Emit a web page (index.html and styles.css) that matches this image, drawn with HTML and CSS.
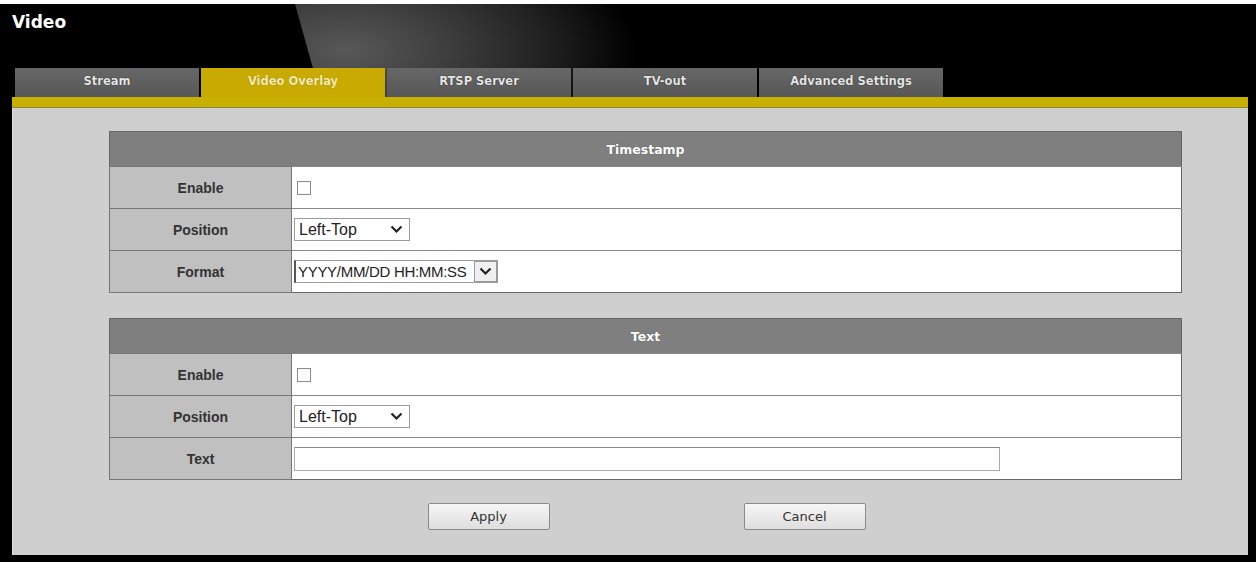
FILE: index.html
```html
<!DOCTYPE html>
<html lang="en">
<head>
    <meta charset="UTF-8">
    <meta name="viewport" content="width=device-width, initial-scale=1.0">
    <title>Video</title>
    <link rel="stylesheet" href="styles.css">
</head>
<body>
    <div class="frame">
        <div class="top">
            <h1 class="title">Video</h1>
            <div class="tabs">
                <div class="tab">Stream</div>
                <div class="tab active">Video Overlay</div>
                <div class="tab">RTSP Server</div>
                <div class="tab">TV-out</div>
                <div class="tab">Advanced Settings</div>
            </div>
        </div>
        <div class="bar"></div>

        <div class="content">
            <!-- Timestamp -->
            <table class="settings">
                <tr class="head-row"><th colspan="2" class="head">Timestamp</th></tr>
                <tr>
                    <td class="label">Enable</td>
                    <td class="value"><input type="checkbox" class="check"></td>
                </tr>
                <tr>
                    <td class="label">Position</td>
                    <td class="value">
                        <span class="select">
                            <select class="pick">
                                <option>Left-Top</option>
                                <option>Right-Top</option>
                                <option>Left-Bottom</option>
                                <option>Right-Bottom</option>
                            </select>
                            <svg class="chev" width="13" height="9" viewBox="0 0 13 9"><path d="M1.5 1.5 L6.5 6.5 L11.5 1.5" fill="none" stroke="#222" stroke-width="2.2"/></svg>
                        </span>
                    </td>
                </tr>
                <tr>
                    <td class="label">Format</td>
                    <td class="value">
                        <span class="select">
                            <select class="pick format">
                                <option>YYYY/MM/DD HH:MM:SS</option>
                                <option>MM/DD/YYYY HH:MM:SS</option>
                                <option>DD/MM/YYYY HH:MM:SS</option>
                            </select>
                            <span class="drop">
                                <svg width="13" height="9" viewBox="0 0 13 9"><path d="M1.5 1.5 L6.5 6.5 L11.5 1.5" fill="none" stroke="#222" stroke-width="2.2"/></svg>
                            </span>
                        </span>
                    </td>
                </tr>
            </table>

            <!-- Text -->
            <table class="settings second">
                <tr class="head-row"><th colspan="2" class="head">Text</th></tr>
                <tr>
                    <td class="label">Enable</td>
                    <td class="value"><input type="checkbox" class="check"></td>
                </tr>
                <tr>
                    <td class="label">Position</td>
                    <td class="value">
                        <span class="select">
                            <select class="pick">
                                <option>Left-Top</option>
                                <option>Right-Top</option>
                                <option>Left-Bottom</option>
                                <option>Right-Bottom</option>
                            </select>
                            <svg class="chev" width="13" height="9" viewBox="0 0 13 9"><path d="M1.5 1.5 L6.5 6.5 L11.5 1.5" fill="none" stroke="#222" stroke-width="2.2"/></svg>
                        </span>
                    </td>
                </tr>
                <tr>
                    <td class="label">Text</td>
                    <td class="value"><input type="text" class="field"></td>
                </tr>
            </table>

            <div class="actions">
                <button class="btn">Apply</button>
                <button class="btn">Cancel</button>
            </div>
        </div>
    </div>
</body>
</html>
```

FILE: styles.css
```css
body { margin: 0; background: #fff; font-family: "Liberation Sans", Arial, sans-serif; }
.frame { margin-top: 4px; background: #000; padding: 0 8px 7px 12px; }

/* Header with the grey sweep behind the tabs */
.top { position: relative; height: 93px; }
.top::before {
    content: "";
    position: absolute;
    left: 283px;
    top: 0;
    width: 340px;
    height: 93px;
    background: radial-gradient(ellipse 290px 140px at 15% 50%, #585858 0%, #3e3e3e 35%, #202020 70%, #000 100%);
    clip-path: polygon(0 0, 100% 0, 100% 100%, 26px 100%);
}
.title {
    position: relative;
    z-index: 1;
    margin: 0;
    height: 64px;
    box-sizing: border-box;
    padding-top: 8px;
    color: #fff;
    font: bold 17px "DejaVu Sans", Verdana, sans-serif;
}
.tabs { position: relative; z-index: 1; display: flex; gap: 2px; margin-left: 3px; height: 29px; }
.tab {
    width: 184px;
    background: linear-gradient(#676767, #575757);
    color: #e6e6e6;
    font: bold 11.5px "DejaVu Sans", Verdana, sans-serif;
    text-align: center;
    line-height: 27px;
    text-shadow: 0 0 1px #000;
}
.tab.active { background: #c9aa00; color: #f4ebb4; text-shadow: 0 0 1px #8a7400; }
.bar { height: 11px; background: #c8b000; border-bottom: 1px solid #8b8838; box-sizing: border-box; }

/* Settings area */
.content {
    height: 447px;
    box-sizing: border-box;
    background: #cfcfcf;
    border-left: 1px solid #dcdcdc;
    padding: 23px 66px 0 96px;
}
.settings { width: 1073px; border-collapse: collapse; border: 1px solid #666; }
.settings.second { margin-top: 25px; }
.settings tr { height: 42px; }
.settings tr.head-row { height: 35px; }
.head {
    padding: 0;
    background: #7f7f7f;
    color: #fff;
    font: bold 12.5px "DejaVu Sans", Verdana, sans-serif;
    text-shadow: 0 0 1px #555;
}
.label {
    width: 181px;
    padding: 0;
    background: #c0c0c0;
    border: 1px solid #777;
    text-align: center;
    color: #333;
    font-weight: bold;
    font-size: 14px;
}
.value { padding: 0 0 0 2px; background: #fff; border-top: 1px solid #888; vertical-align: middle; }

.check {
    appearance: none;
    display: block;
    width: 14px;
    height: 14px;
    box-sizing: border-box;
    margin: 0 0 0 3px;
    border: 1px solid #8a8a8a;
    background: #fff;
}
.select { position: relative; display: inline-block; vertical-align: middle; }
.pick {
    appearance: none;
    display: block;
    width: 116px;
    height: 23px;
    margin: 0;
    padding: 0 0 0 4px;
    border: 1px solid #9c9c9c;
    border-radius: 0;
    background: #fff;
    color: #222;
    font: 16px "Liberation Sans", Arial, sans-serif;
}
.chev { position: absolute; right: 7px; top: 7px; pointer-events: none; }
.pick.format {
    width: 204px;
    padding-left: 2px;
    border-left: 2px solid #555;
    font-size: 15px;
    letter-spacing: -0.3px;
}
.drop {
    position: absolute;
    right: 1px;
    top: 1px;
    width: 21px;
    height: 19px;
    border: 1px solid #999;
    background: #f0f0f0;
    display: flex;
    align-items: center;
    justify-content: center;
    pointer-events: none;
}
.field {
    display: block;
    width: 706px;
    height: 24px;
    box-sizing: border-box;
    margin: 0;
    border: 1px solid #aaa;
    border-top-color: #888;
    background: #fff;
}

.actions { display: flex; justify-content: center; gap: 194px; width: 1075px; margin-top: 23px; }
.btn {
    width: 122px;
    height: 27px;
    border: 1px solid #8a8a8a;
    border-radius: 2px;
    background: linear-gradient(#f6f6f6, #dedede);
    color: #333;
    font: 13px "DejaVu Sans", Verdana, sans-serif;
    cursor: pointer;
}
```
